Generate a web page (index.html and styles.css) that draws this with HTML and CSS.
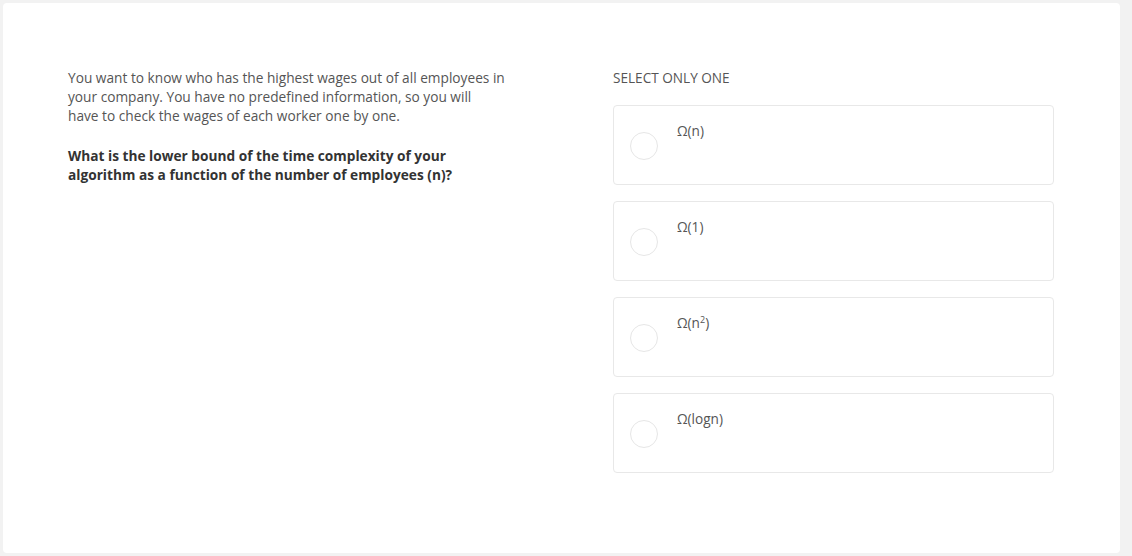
FILE: index.html
```html
<!DOCTYPE html>
<html>
<head>
<meta charset="utf-8">
<link rel="stylesheet" href="styles.css">
</head>
<body>
<div class="card">
  <div class="question">
    <p class="prompt">You want to know who has the highest wages out of all employees in<br>your company. You have no predefined information, so you will<br>have to check the wages of each worker one by one.</p>
    <p class="ask">What is the lower bound of the time complexity of your<br>algorithm as a function of the number of employees (n)?</p>
  </div>
  <div class="answers">
    <div class="hint">SELECT ONLY ONE</div>
    <div class="options">
      <div class="option"><span class="radio"></span><span class="label">Ω(n)</span></div>
      <div class="option"><span class="radio"></span><span class="label">Ω(1)</span></div>
      <div class="option"><span class="radio"></span><span class="label">Ω(n<sup>2</sup>)</span></div>
      <div class="option"><span class="radio"></span><span class="label">Ω(logn)</span></div>
    </div>
  </div>
</div>
</body>
</html>
```
FILE: styles.css
```css
html, body {
  margin: 0;
  padding: 0;
  background: #f2f2f2;
  font-family: "Open Sans", "Liberation Sans", sans-serif;
  font-size: 13.7px;
  color: #555;
}
.card {
  margin: 3px 0 0 3px;
  width: 1117px;
  height: 550px;
  box-sizing: border-box;
  background: #fff;
  border-radius: 4px;
  padding: 65px 0 0 65px;
  display: flex;
}
.question {
  width: 480px;
  margin-right: 65px;
  white-space: nowrap;
}
.question p {
  margin: 0;
  line-height: 19px;
}
.prompt {
  color: #555;
}
.ask {
  margin-top: 21px !important;
  font-weight: 700;
  color: #333;
}
.answers {
  width: 441px;
}
.hint {
  font-size: 13.6px;
  line-height: 19px;
  text-transform: uppercase;
  color: #555;
  margin-bottom: 18px;
}
.options {
  display: flex;
  flex-direction: column;
  gap: 16px;
}
.option {
  height: 80px;
  box-sizing: border-box;
  border: 1px solid #e8e8e8;
  border-radius: 4px;
  position: relative;
  display: flex;
  align-items: flex-start;
  padding: 15px 0 0 63px;
}
.radio {
  position: absolute;
  left: 16px;
  top: 26px;
  width: 26px;
  height: 26px;
  border: 1px solid #e6e6e6;
  border-radius: 50%;
}
.label {
  font-size: 13.6px;
  line-height: 19px;
  color: #555;
}
.label sup {
  font-size: 9px;
  line-height: 0;
  vertical-align: 5px;
}
```
